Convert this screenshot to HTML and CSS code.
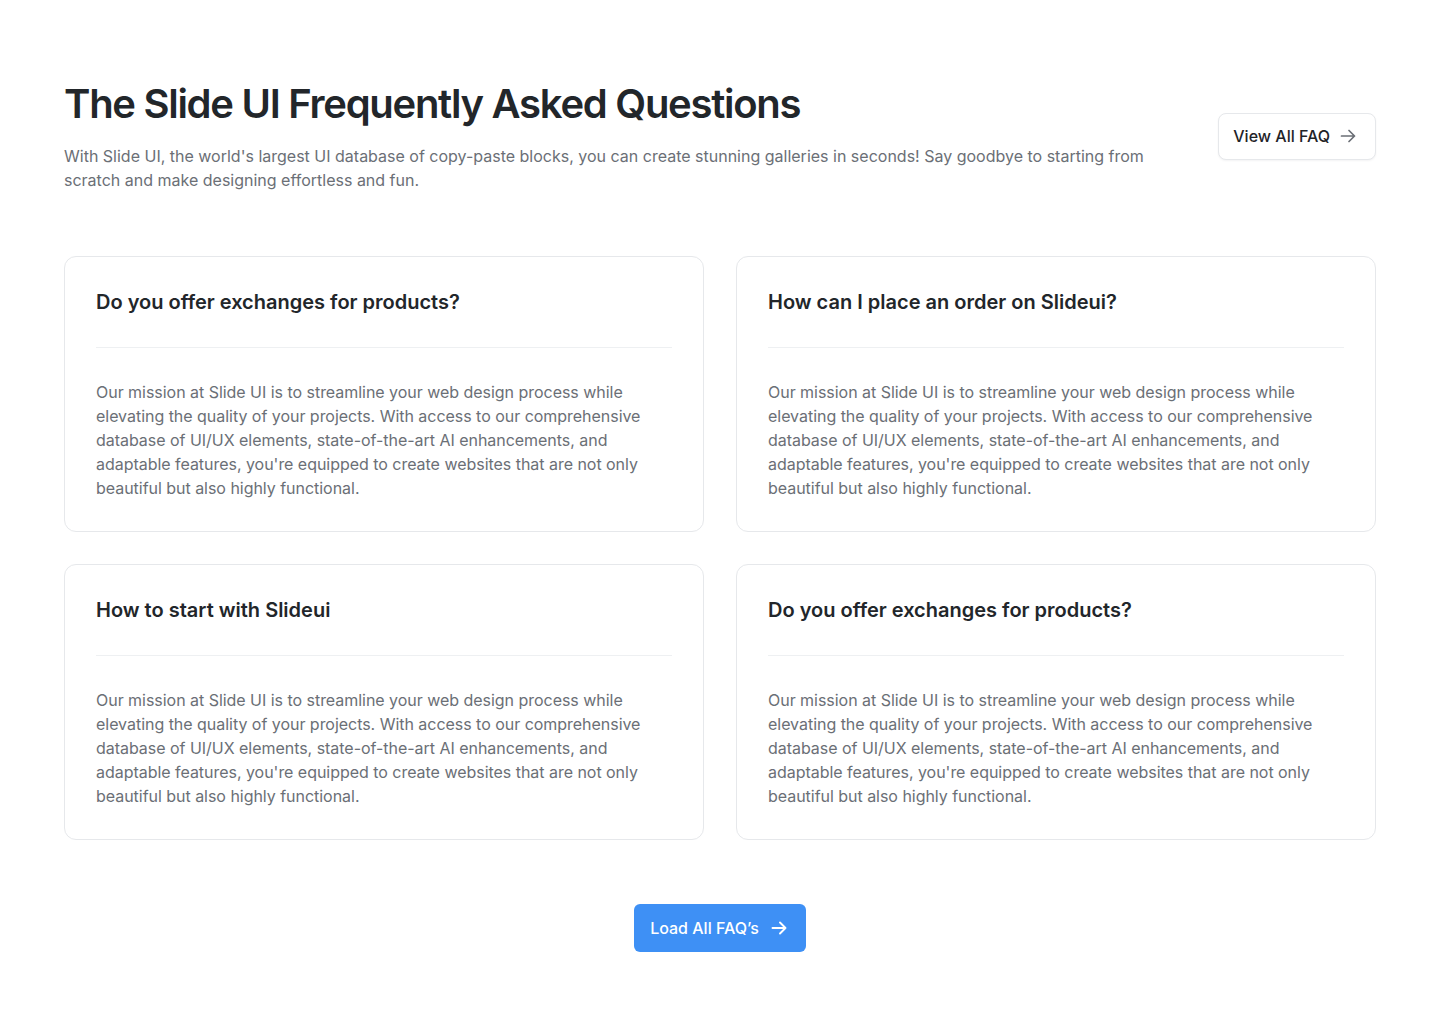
FILE: index.html
```html
<!DOCTYPE html>
<html lang="en">
<head>
<meta charset="utf-8">
<title>FAQ</title>
<link rel="stylesheet" href="styles.css">
</head>
<body>
<main class="page">
  <header class="head">
    <div class="head-text">
      <h1 class="title">The Slide UI Frequently Asked Questions</h1>
      <p class="lead">With Slide UI, the world's largest UI database of copy-paste blocks, you can create stunning galleries in seconds! Say goodbye to starting from scratch and make designing effortless and fun.</p>
    </div>
    <a class="btn-outline" href="#">View All FAQ
      <svg class="arrow" width="20" height="20" viewBox="0 0 20 20" fill="none" stroke="currentColor" stroke-width="1.7" stroke-linecap="round" stroke-linejoin="round"><path d="M3.5 10h13M11 4.5l5.5 5.5-5.5 5.5"/></svg>
    </a>
  </header>

  <section class="grid">
    <article class="card">
      <h2 class="card-title">Do you offer exchanges for products?</h2>
      <p class="card-body">Our mission at Slide UI is to streamline your web design process while elevating the quality of your projects. With access to our comprehensive database of UI/UX elements, state-of-the-art AI enhancements, and adaptable features, you're equipped to create websites that are not only beautiful but also highly functional.</p>
    </article>
    <article class="card">
      <h2 class="card-title">How can I place an order on Slideui?</h2>
      <p class="card-body">Our mission at Slide UI is to streamline your web design process while elevating the quality of your projects. With access to our comprehensive database of UI/UX elements, state-of-the-art AI enhancements, and adaptable features, you're equipped to create websites that are not only beautiful but also highly functional.</p>
    </article>
    <article class="card">
      <h2 class="card-title">How to start with Slideui</h2>
      <p class="card-body">Our mission at Slide UI is to streamline your web design process while elevating the quality of your projects. With access to our comprehensive database of UI/UX elements, state-of-the-art AI enhancements, and adaptable features, you're equipped to create websites that are not only beautiful but also highly functional.</p>
    </article>
    <article class="card">
      <h2 class="card-title">Do you offer exchanges for products?</h2>
      <p class="card-body">Our mission at Slide UI is to streamline your web design process while elevating the quality of your projects. With access to our comprehensive database of UI/UX elements, state-of-the-art AI enhancements, and adaptable features, you're equipped to create websites that are not only beautiful but also highly functional.</p>
    </article>
  </section>

  <div class="foot">
    <a class="btn-primary" href="#">Load All FAQ’s
      <svg class="arrow" width="20" height="20" viewBox="0 0 20 20" fill="none" stroke="currentColor" stroke-width="1.9" stroke-linecap="round" stroke-linejoin="round"><path d="M3.5 10h13M11 4.5l5.5 5.5-5.5 5.5"/></svg>
    </a>
  </div>
</main>
</body>
</html>
```

FILE: styles.css
```css
* { box-sizing: border-box; }
html, body { margin: 0; padding: 0; background: #ffffff; }
body {
  font-family: Inter, "Noto Sans", sans-serif;
  color: #1f2328;
  -webkit-font-smoothing: antialiased;
}
.page {
  padding: 80px 64px 80px;
}
.head {
  display: flex;
  align-items: center;
  justify-content: space-between;
  gap: 64px;
}
.head-text { max-width: 1100px; }
.title {
  margin: 0;
  font-size: 40px;
  line-height: 48px;
  font-weight: 600;
  letter-spacing: -0.032em;
  color: #22262a;
}
.lead {
  margin: 16px 0 0;
  font-size: 16px;
  line-height: 24px;
  color: #6b6f76;
}
.btn-outline {
  flex: none;
  display: inline-flex;
  align-items: center;
  gap: 8px;
  height: 47px;
  padding: 0 17px 0 14px;
  border: 1px solid #e6e8eb;
  border-radius: 8px;
  box-shadow: 0 1px 2px rgba(16, 24, 40, 0.05);
  background: #fff;
  color: #1f2328;
  font-size: 16px;
  font-weight: 500;
  text-decoration: none;
}
.btn-outline .arrow { color: #6b6f76; }
.grid {
  margin-top: 64px;
  display: grid;
  grid-template-columns: 1fr 1fr;
  gap: 32px;
}
.card {
  border: 1px solid #e6e8eb;
  border-radius: 12px;
  padding: 31px 31px 31px;
  background: #fff;
}
.card-title {
  margin: 0;
  padding-bottom: 31px;
  border-bottom: 1px solid #eef0f2;
  font-size: 20px;
  line-height: 28px;
  font-weight: 600;
  letter-spacing: 0;
  color: #22262a;
}
.card-body {
  margin: 32px 0 0;
  font-size: 16px;
  line-height: 24px;
  letter-spacing: -0.002em;
  color: #6b6f76;
}
.foot {
  margin-top: 64px;
  display: flex;
  justify-content: center;
}
.btn-primary {
  display: inline-flex;
  align-items: center;
  gap: 10px;
  height: 48px;
  padding: 0 17px 0 16px;
  border-radius: 6px;
  background: #3e90f5;
  color: #fff;
  font-size: 16px;
  font-weight: 500;
  text-decoration: none;
}
```
